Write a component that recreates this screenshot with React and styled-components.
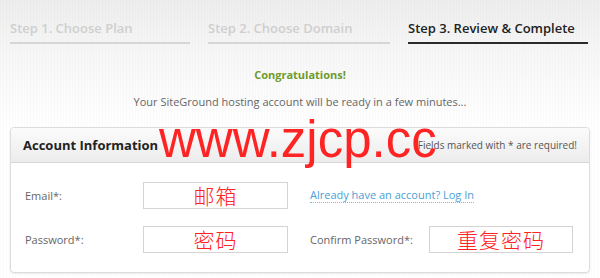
import React from "react";
import styled, { createGlobalStyle } from "styled-components";

const GlobalStyle = createGlobalStyle`
  html, body {
    margin: 0;
    padding: 0;
    width: 600px;
    height: 278px;
    overflow: hidden;
  }
  body {
    font-family: "Open Sans", "Liberation Sans", sans-serif;
    background: #fff;
  }
`;

const Page = styled.div`
  position: relative;
  width: 600px;
  height: 278px;
  box-sizing: border-box;
  padding: 0 10px;
  background:
    repeating-linear-gradient(90deg, rgba(0, 0, 0, 0.012) 0 1px, transparent 1px 3px),
    linear-gradient(180deg, #ededed 0px, #f6f6f6 50px, #fdfdfd 110px, #fff 130px);
`;

const Steps = styled.div`
  display: grid;
  grid-template-columns: 180px 182px 180px;
  column-gap: 18px;
  padding-top: 18px;
`;

const Step = styled.div`
  font-size: 13px;
  font-weight: 600;
  line-height: 20px;
  color: ${(p) => (p.$active ? "#222" : "#cfcfcf")};
  padding-bottom: 4px;
  border-bottom: 2px solid ${(p) => (p.$active ? "#2a2a2a" : "#d6d6d6")};
  white-space: nowrap;
`;

const Message = styled.div`
  text-align: center;
  margin-top: 23px;
`;

const Congrats = styled.div`
  color: #6f9a2c;
  font-size: 11px;
  font-weight: 700;
  line-height: 16px;
`;

const Ready = styled.div`
  color: #666;
  font-size: 11px;
  line-height: 16px;
  margin-top: 11px;
`;

const Panel = styled.div`
  margin-top: 17px;
  border: 1px solid #dcdcdc;
  border-radius: 4px;
  background: #fff;
  box-shadow: 0 1px 2px rgba(0, 0, 0, 0.08);
  overflow: hidden;
`;

const PanelHeader = styled.div`
  display: flex;
  align-items: center;
  justify-content: space-between;
  height: 34px;
  padding: 0 12px;
  background: linear-gradient(180deg, #fbfbfb, #ececec);
  border-bottom: 1px solid #d8d8d8;
`;

const PanelTitle = styled.div`
  font-size: 13px;
  font-weight: 700;
  color: #222;
`;

const Required = styled.div`
  font-size: 10px;
  color: #555;
`;

const Form = styled.div`
  display: grid;
  grid-template-columns: 118px 145px 22px 119px 144px;
  grid-auto-rows: 27px;
  row-gap: 17px;
  align-items: center;
  padding: 19px 14px 19px;
`;

const Label = styled.div`
  font-size: 11px;
  color: #666;
  grid-column: ${(p) => p.$col};
`;

const Input = styled.div`
  grid-column: ${(p) => p.$col};
  height: 27px;
  box-sizing: border-box;
  border: 1px solid #d4d4d4;
  display: flex;
  align-items: center;
  justify-content: center;
  color: #f22;
  font-family: "Noto Sans CJK SC", sans-serif;
  font-weight: 300;
  font-size: 21px;
  letter-spacing: 1px;
  line-height: 1;
`;

const LoginLink = styled.a`
  grid-column: 4 / 6;
  justify-self: start;
  font-size: 11px;
  color: #4a9fd4;
  text-decoration: none;
  border-bottom: 1px dotted #7bb9e0;
  line-height: 14px;
`;

const Watermark = styled.div`
  position: absolute;
  left: 159px;
  top: 112px;
  font-family: "Liberation Sans", Arial, sans-serif;
  font-size: 51px;
  line-height: 56px;
  color: #ff2424;
  pointer-events: none;
`;

export default function App() {
  return (
    <>
      <GlobalStyle />
      <Page>
        <Steps>
          <Step>Step 1. Choose Plan</Step>
          <Step>Step 2. Choose Domain</Step>
          <Step $active>Step 3. Review &amp; Complete</Step>
        </Steps>
        <Message>
          <Congrats>Congratulations!</Congrats>
          <Ready>Your SiteGround hosting account will be ready in a few minutes...</Ready>
        </Message>
        <Panel>
          <PanelHeader>
            <PanelTitle>Account Information</PanelTitle>
            <Required>Fields marked with * are required!</Required>
          </PanelHeader>
          <Form>
            <Label $col={1}>Email*:</Label>
            <Input $col={2}>邮箱</Input>
            <LoginLink href="#">Already have an account? Log In</LoginLink>
            <Label $col={1}>Password*:</Label>
            <Input $col={2}>密码</Input>
            <Label $col={4}>Confirm Password*:</Label>
            <Input $col={5}>重复密码</Input>
          </Form>
        </Panel>
        <Watermark>www.zjcp.cc</Watermark>
      </Page>
    </>
  );
}
